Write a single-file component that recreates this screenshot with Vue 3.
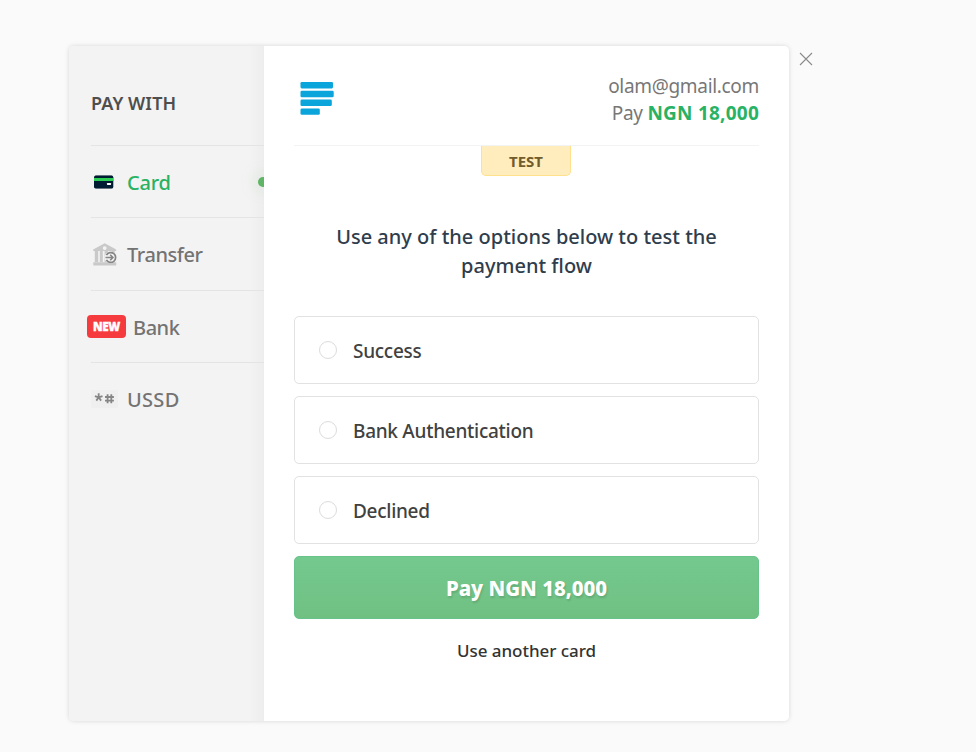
<script setup>
import { ref } from 'vue'

const channels = [
  { id: 'card', label: 'Card' },
  { id: 'transfer', label: 'Transfer' },
  { id: 'bank', label: 'Bank' },
  { id: 'ussd', label: 'USSD' }
]
const active = ref('card')
const options = ['Success', 'Bank Authentication', 'Declined']
const selected = ref('')
</script>

<template>
  <main class="page">
    <div class="modal">
      <aside class="sidebar">
        <h2 class="side-title">PAY WITH</h2>
        <nav class="channels">
          <a
            v-for="c in channels"
            :key="c.id"
            class="channel"
            :class="[c.id, { active: active === c.id }]"
            @click="active = c.id"
          >
            <span v-if="c.id === 'bank'" class="new">NEW</span>
            <span v-else class="icon">
              <svg v-if="c.id === 'card'" width="20" height="14" viewBox="0 0 20 14">
                <rect x="0.5" y="0" width="18.5" height="14" rx="1.8" fill="#8b929b" />
                <rect x="0" y="0.8" width="19.3" height="12.4" rx="1.5" fill="#011b33" />
                <rect x="0" y="3" width="19.3" height="3" fill="#2dcc52" />
                <rect x="13" y="8" width="4" height="2" rx="0.4" fill="#fff" />
              </svg>
              <svg v-else-if="c.id === 'transfer'" width="24" height="23" viewBox="0 0 24 23">
                <path
                  fill="#c9c9c9"
                  fill-rule="evenodd"
                  d="M11.7 0.3 23.2 6.6V8H0.2V6.6ZM11.7 3.2a1.9 1.9 0 1 0 0 3.8a1.9 1.9 0 0 0 0-3.8ZM1.8 8H5.2V19.5H1.8ZM6.8 8H9.8V19.5H6.8ZM11.6 8H15V19.5H11.6ZM18.5 8H21.7V19.5H18.5ZM0.3 19.3H23.2V22.5H0.3Z"
                />
                <circle cx="17.6" cy="14.5" r="6" fill="#f3f3f3" />
                <path d="M13.4 12.2a4.900 4.900 0 1 1 0 4.600" fill="none" stroke="#858585" stroke-width="1.700" />
                <path d="M12.500 14.500h7.300M17.200 11.800l2.700 2.700-2.700 2.700" fill="none" stroke="#858585" stroke-width="1.600" />
              </svg>
              <svg v-else width="27" height="18" viewBox="0 0 27 18">
                <rect width="27" height="18" rx="1" fill="#efefef" />
                <g fill="none" stroke="#858585" stroke-width="1.800">
                  <path d="M7.7 7.3V3.300M7.7 7.300L3.900 6.100M7.700 7.300L11.500 6.100M7.700 7.300L5.300 10.600M7.700 7.300L10.100 10.600" />
                  <path d="M16.600 4.300v9M20.300 4.300v9M14 7h8.900M14 10.700h8.900" />
                </g>
              </svg>
            </span>
            <span class="label">{{ c.label }}</span>
            <i v-if="active === c.id" class="dot"></i>
          </a>
        </nav>
      </aside>

      <section class="content">
        <header class="header">
          <svg class="logo" width="35" height="35" viewBox="0 0 35 35" fill="#0ba4db">
            <rect x="0.5" y="1" width="32.5" height="6.4" rx="1.3" />
            <rect x="0.5" y="9.8" width="33.2" height="6.4" rx="1.3" />
            <rect x="0.5" y="18.6" width="31.3" height="6.4" rx="1.3" />
            <rect x="0.5" y="27.4" width="19.3" height="6.4" rx="1.3" />
          </svg>
          <div class="summary">
            <div class="email">olam@gmail.com</div>
            <div class="amount">Pay <b>NGN 18,000</b></div>
          </div>
        </header>
        <div class="test">TEST</div>
        <p class="prompt">Use any of the options below to test the<br />payment flow</p>
        <div class="options">
          <label v-for="o in options" :key="o" class="option">
            <input v-model="selected" type="radio" name="outcome" :value="o" />
            <span>{{ o }}</span>
          </label>
        </div>
        <button class="pay">Pay NGN 18,000</button>
        <a class="another">Use another card</a>
      </section>
    </div>
    <button class="close" aria-label="Close">
      <svg width="14" height="14" viewBox="0 0 14 14">
        <path d="M1 1l12 12M13 1L1 13" stroke="#8a8a8a" stroke-width="1.1" fill="none" />
      </svg>
    </button>
  </main>
</template>

<style>
body {
  margin: 0;
  background: #fafafa;
}
</style>

<style scoped>
.page {
  box-sizing: border-box;
  width: 976px;
  height: 752px;
  padding: 46px 0 0 69px;
  display: flex;
  align-items: flex-start;
  font-family: "Noto Sans", "Open Sans", sans-serif;
  background: #fafafa;
}
.modal {
  display: flex;
  width: 720px;
  height: 675px;
  border-radius: 5px;
  box-shadow: 0 0 5px rgba(0, 0, 0, 0.14);
}
.sidebar {
  box-sizing: border-box;
  width: 195px;
  padding-left: 22px;
  background: linear-gradient(to right, rgba(0, 0, 0, 0) 180px, rgba(0, 0, 0, 0.025)) #f3f3f3;
  border-radius: 5px 0 0 5px;
  overflow: hidden;
}
.side-title {
  margin: 0;
  height: 99px;
  line-height: 115px;
  font-size: 18px;
  font-weight: 600;
  letter-spacing: 0.1px;
  color: #4e4e4e;
}
.channel {
  box-sizing: border-box;
  display: flex;
  align-items: center;
  height: 72.4px;
  border-top: 1px solid #e4e4e4;
  color: #737373;
  font-size: 20px;
  font-weight: 500;
  letter-spacing: -0.45px;
  cursor: pointer;
}
.channel.card {
  letter-spacing: -0.2px;
}
.channel.ussd {
  letter-spacing: 0.3px;
}
.icon {
  width: 36px;
  display: flex;
  align-items: center;
}
.card .icon svg {
  margin-left: 3px;
}
.transfer .icon svg {
  margin-left: 2px;
}
.label {
  padding-top: 2px;
  line-height: 28px;
}
.bank .label {
  padding-top: 3px;
}
.channel.active {
  color: #29b263;
}
.new {
  width: 39px;
  height: 23px;
  margin: 0 7px 0 -4px;
  border-radius: 4px;
  background: #f63b3f;
  color: #fff;
  font-size: 11.5px;
  font-weight: 900;
  letter-spacing: -0.3px;
  line-height: 23px;
  text-align: center;
  -webkit-text-stroke: 0.4px #fff;
}
.dot {
  width: 10px;
  height: 10px;
  margin: 0 -4px 0 auto;
  border-radius: 50%;
  background: #5fb565;
  box-shadow: 0 0 16px 5px rgba(95, 181, 101, 0.1);
}
.content {
  box-sizing: border-box;
  width: 525px;
  padding: 0 30px;
  display: flex;
  flex-direction: column;
  background: #fff;
  border-radius: 0 5px 5px 0;
}
.header {
  box-sizing: border-box;
  height: 100px;
  padding: 27px 0 0 6px;
  display: flex;
  justify-content: space-between;
  border-bottom: 1px solid #f3f3f3;
}
.logo {
  margin-top: 8px;
}
.summary {
  text-align: right;
  font-size: 19px;
  line-height: 27px;
  color: #777;
  white-space: nowrap;
}
.email {
  letter-spacing: -0.32px;
}
.amount {
  letter-spacing: -0.25px;
}
.summary b {
  color: #29b263;
  font-weight: 700;
  letter-spacing: 0.22px;
}
.test {
  box-sizing: border-box;
  align-self: center;
  width: 90px;
  height: 30px;
  margin-right: 1px;
  border: 1px solid #ffe08c;
  border-top: 0;
  border-radius: 0 0 5px 5px;
  background: #ffedbd;
  color: #735c2b;
  font-size: 15px;
  font-weight: 700;
  line-height: 30px;
  text-align: center;
}
.prompt {
  margin: 46px 0 0;
  height: 94px;
  color: #2f3d4d;
  font-size: 20px;
  font-weight: 500;
  line-height: 29px;
  text-align: center;
  white-space: nowrap;
}
.options {
  display: flex;
  flex-direction: column;
  gap: 12px;
}
.option {
  box-sizing: border-box;
  height: 68px;
  padding: 1px 24px 0;
  display: flex;
  align-items: center;
  border: 1px solid #e2e2e2;
  border-radius: 5px;
  color: #414141;
  font-size: 19px;
  font-weight: 500;
  letter-spacing: -0.28px;
}
.option input {
  appearance: none;
  box-sizing: border-box;
  width: 18px;
  height: 18px;
  margin: 0 16px 2px 0;
  border: 1px solid #dcdcdc;
  border-radius: 50%;
  background: #fff;
}
.pay {
  margin: 12px 0 0;
  padding: 1px 0 0;
  height: 63px;
  border: 1px solid #67c38a;
  border-radius: 5px;
  background: linear-gradient(#74c98f, #70c082);
  color: #fff;
  font-family: inherit;
  font-size: 20.4px;
  font-weight: 800;
  text-shadow: 1px 2px 2px rgba(0, 0, 0, 0.12);
}
.another {
  align-self: center;
  margin-top: 19px;
  color: #333;
  font-size: 17px;
  font-weight: 500;
  letter-spacing: -0.05px;
  line-height: 25px;
}
.close {
  display: flex;
  margin: 6px 0 0 10px;
  padding: 0 0 0 0.4px;
  border: 0;
  background: none;
}
</style>
